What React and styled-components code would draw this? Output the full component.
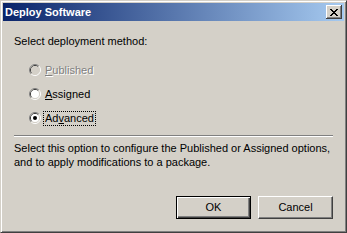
import React from "react";
import styled, { createGlobalStyle } from "styled-components";

const Global = createGlobalStyle`
  html, body { margin: 0; padding: 0; background: #d4d0c8; }
  body { font-family: "Liberation Sans", Arial, sans-serif; font-size: 11px; }
`;

const Window = styled.div`
  box-sizing: border-box;
  width: 347px;
  height: 233px;
  background: #d4d0c8;
  border: 1px solid;
  border-color: #d4d0c8 #404040 #404040 #d4d0c8;
  box-shadow: inset 1px 1px #ffffff, inset -1px -1px #808080;
  padding: 2px;
  display: flex;
  flex-direction: column;
`;

const TitleBar = styled.div`
  height: 18px;
  display: flex;
  align-items: center;
  background: linear-gradient(to right, #0a246a, #a6caf0);
  padding-left: 2px;
`;

const TitleText = styled.div`
  flex: 1;
  color: #ffffff;
  font-weight: bold;
  font-size: 11px;
  line-height: 18px;
  white-space: nowrap;
`;

const CloseButton = styled.div`
  box-sizing: border-box;
  width: 16px;
  height: 14px;
  margin-right: 2px;
  background: #d4d0c8;
  box-shadow: inset -1px -1px #404040, inset 1px 1px #ffffff, inset -2px -2px #808080;
  display: flex;
  align-items: center;
  justify-content: center;
  padding-right: 1px;
`;

const Client = styled.div`
  flex: 1;
  display: flex;
  flex-direction: column;
  padding: 0 11px 11px 11px;
`;

const Heading = styled.div`
  margin-top: 14px;
  line-height: 13px;
  color: #000;
`;

const RadioGroup = styled.div`
  margin-top: 14px;
  padding-left: 15px;
  display: flex;
  flex-direction: column;
  gap: 8px;
`;

const Row = styled.div`
  height: 16px;
  display: flex;
  align-items: center;
  gap: 2px;
`;

const Label = styled.span`
  box-sizing: border-box;
  line-height: 13px;
  padding: 0 1px;
  border: 1px ${(p) => (p.$focused ? "dotted #000" : "solid transparent")};
  color: ${(p) => (p.$disabled ? "#808080" : "#000")};
  text-shadow: ${(p) => (p.$disabled ? "1px 1px #ffffff" : "none")};
  u { text-decoration: underline; text-underline-offset: 1px; }
`;

const Separator = styled.div`
  margin-top: 9px;
  border-top: 1px solid #808080;
  border-bottom: 1px solid #ffffff;
  height: 0;
`;

const Description = styled.div`
  margin-top: 4px;
  line-height: 14px;
  color: #000;
`;

const ButtonRow = styled.div`
  margin-top: auto;
  display: flex;
  justify-content: flex-end;
  gap: 7px;
`;

const Button = styled.div`
  box-sizing: border-box;
  width: 75px;
  height: 23px;
  display: flex;
  align-items: center;
  justify-content: center;
  background: #d4d0c8;
  color: #000;
  line-height: 13px;
  border: 1px solid ${(p) => (p.$default ? "#000000" : "transparent")};
  box-shadow: ${(p) =>
    p.$default
      ? "inset 1px 1px #ffffff, inset -1px -1px #404040, inset -2px -2px #808080"
      : "none"};
  ${(p) =>
    !p.$default &&
    `border-color: #ffffff #404040 #404040 #ffffff; box-shadow: inset -1px -1px #808080;`}
`;

const Radio = ({ checked, disabled }) => (
  <svg width="12" height="12" viewBox="0 0 12 12">
    <path d="M2.11 9.89 A5.5 5.5 0 0 1 9.89 2.11" fill="none" stroke="#808080" strokeWidth="1" />
    <path d="M9.89 2.11 A5.5 5.5 0 0 1 2.11 9.89" fill="none" stroke="#ffffff" strokeWidth="1" />
    <path d="M2.82 9.18 A4.5 4.5 0 0 1 9.18 2.82" fill="none" stroke="#404040" strokeWidth="1" />
    <path d="M9.18 2.82 A4.5 4.5 0 0 1 2.82 9.18" fill="none" stroke="#d4d0c8" strokeWidth="1" />
    <circle cx="6" cy="6" r="4" fill={disabled ? "#d4d0c8" : "#ffffff"} />
    {checked && <circle cx="6" cy="6" r="2" fill="#000" />}
  </svg>
);

const CloseGlyph = () => (
  <svg width="8" height="7" viewBox="0 0 8 7" shapeRendering="crispEdges">
    <path
      fill="#000"
      d="M0 0h2v1h-2z M6 0h2v1h-2z M1 1h2v1h-2z M5 1h2v1h-2z M2 2h4v1h-4z M3 3h2v1h-2z M2 4h4v1h-4z M1 5h2v1h-2z M5 5h2v1h-2z M0 6h2v1h-2z M6 6h2v1h-2z"
    />
  </svg>
);

export default function App() {
  return (
    <>
      <Global />
      <Window>
        <TitleBar>
          <TitleText>Deploy Software</TitleText>
          <CloseButton>
            <CloseGlyph />
          </CloseButton>
        </TitleBar>
        <Client>
          <Heading>Select deployment method:</Heading>
          <RadioGroup>
            <Row>
              <Radio disabled />
              <Label $disabled>
                <u>P</u>ublished
              </Label>
            </Row>
            <Row>
              <Radio />
              <Label>
                <u>A</u>ssigned
              </Label>
            </Row>
            <Row>
              <Radio checked />
              <Label $focused>
                Ad<u>v</u>anced
              </Label>
            </Row>
          </RadioGroup>
          <Separator />
          <Description>
            Select this option to configure the Published or Assigned options,
            <br />
            and to apply modifications to a package.
          </Description>
          <ButtonRow>
            <Button $default>OK</Button>
            <Button>Cancel</Button>
          </ButtonRow>
        </Client>
      </Window>
    </>
  );
}
